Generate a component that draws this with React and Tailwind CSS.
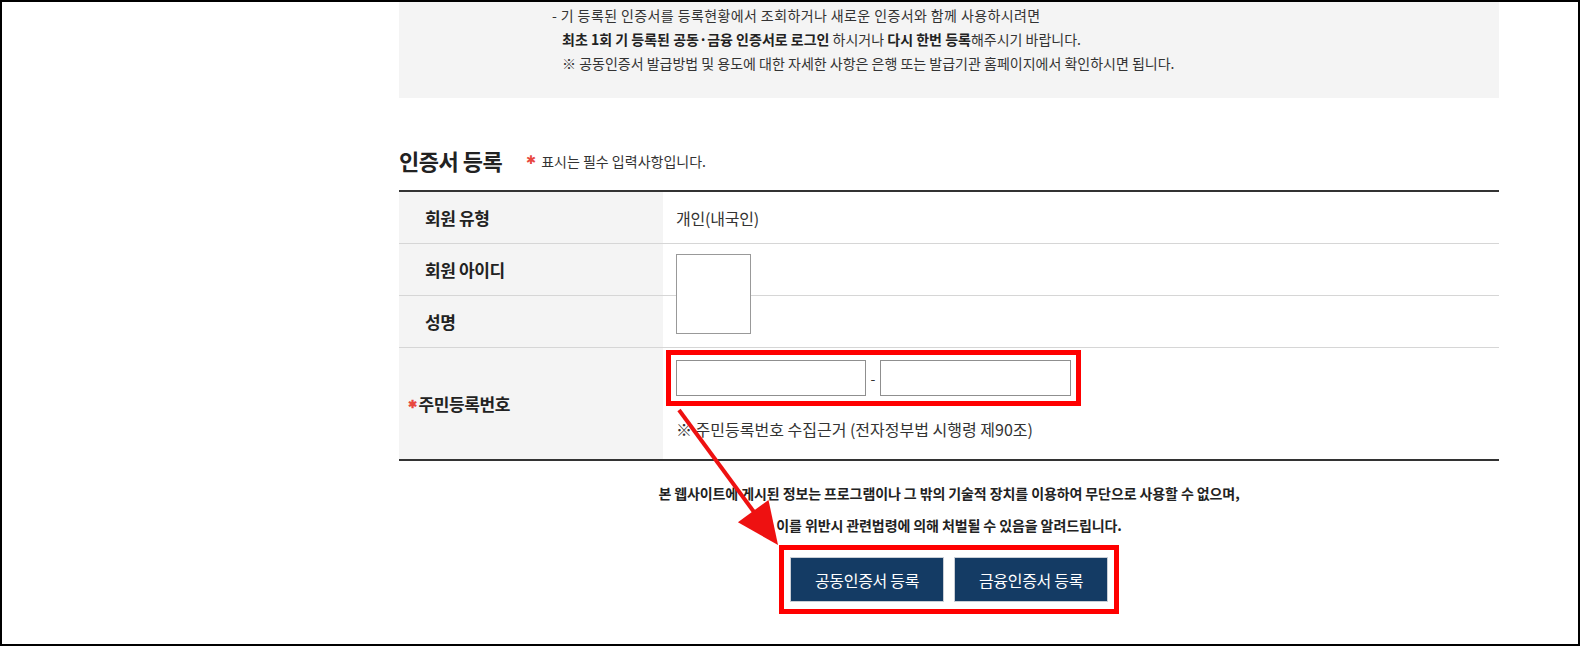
import React from "react";

const FONT = { fontFamily: '"Noto Sans CJK KR", "Noto Sans", sans-serif' };

function Star({ className = "" }) {
  return <span className={"text-[#e8473f] " + className}>✱</span>;
}

function Row({ label, children, star, h = "h-[52px]", last }) {
  return (
    <div className={"flex " + h + (last ? "" : " border-b border-[#d6d6d6]")}>
      <div className={"w-[264px] shrink-0 bg-[#f4f4f4] flex items-center text-[17px] font-bold text-[#222] tracking-[-0.4px] " + (star ? "pl-[9px]" : "pl-[26px]")}>
        {star && <Star className="text-[11px] mr-[2px]" />}
        {label}
      </div>
      <div className="flex-1 pl-[13px]">{children}</div>
    </div>
  );
}

export default function App() {
  return (
    <div style={FONT} className="relative w-[1580px] h-[646px] border-2 border-black bg-white overflow-hidden text-[#333]">
      <div className="ml-[397px] w-[1100px]">
        {/* notice box */}
        <div className="h-[96px] bg-[#f4f4f4] pt-[1px] text-[14px] leading-[24px] text-[#333]">
          <div className="pl-[153px] tracking-[0.4px]">- 기 등록된 인증서를 등록현황에서 조회하거나 새로운 인증서와 함께 사용하시려면</div>
          <div className="pl-[163px]">
            <b className="text-[#222]">최초 1회 기 등록된 공동·금융 인증서로 로그인</b> 하시거나 <b className="text-[#222]">다시 한번 등록</b>해주시기 바랍니다.
          </div>
          <div className="pl-[163px]">※ 공동인증서 발급방법 및 용도에 대한 자세한 사항은 은행 또는 발급기관 홈페이지에서 확인하시면 됩니다.</div>
        </div>

        {/* title */}
        <div className="mt-[47px] flex items-end h-[30px]">
          <h2 className="text-[22px] font-bold text-[#222] tracking-[-0.5px] leading-[30px]">인증서 등록</h2>
          <div className="ml-[24px] mb-[3px] flex items-center text-[14px] text-[#333]">
            <Star className="text-[12px] mr-[5px] -mt-[6px]" />
            표시는 필수 입력사항입니다.
          </div>
        </div>

        {/* table */}
        <div className="relative mt-[15px] border-t-2 border-b-2 border-[#333]">
          <Row label="회원 유형">
            <div className="h-full flex items-center text-[16px] tracking-[-0.2px] text-[#333]">개인(내국인)</div>
          </Row>
          <Row label="회원 아이디" />
          <Row label="성명" />
          <Row label="주민등록번호" star h="h-[111px]" last>
            <div className="pt-[2px] -ml-[10px]">
              <div className="inline-flex items-center border-[5px] border-[#ff0000] px-[5px] py-[5px]">
                <div className="w-[190px] h-[36px] border border-[#8f8f8f] bg-white" />
                <span className="w-[14px] text-center text-[14px] text-[#333]">-</span>
                <div className="w-[191px] h-[36px] border border-[#8f8f8f] bg-white" />
              </div>
              <div className="mt-[11px] ml-[10px] text-[16px] leading-[24px] text-[#333]">
                ※ 주민등록번호 수집근거 (전자정부법 시행령 제90조)
              </div>
            </div>
          </Row>
          {/* broken field box overlapping two rows */}
          <div className="absolute left-[277px] top-[62px] w-[75px] h-[80px] border border-[#999] bg-white" />
        </div>

        {/* legal notice */}
        <div className="mt-[16px] text-center text-[14px] font-bold leading-[32px] tracking-[-0.1px] text-[#222]">
          <p>본 웹사이트에 게시된 정보는 프로그램이나 그 밖의 기술적 장치를 이용하여 무단으로 사용할 수 없으며,</p>
          <p>이를 위반시 관련법령에 의해 처벌될 수 있음을 알려드립니다.</p>
        </div>

        <div className="mt-[4px] flex justify-center">
          <div className="flex gap-[10px] border-[5px] border-[#ff0000] px-[6px] py-[7px]">
            <button className="w-[154px] h-[45px] bg-[#143b64] border border-[#c9ced6] text-white text-[16px] tracking-[-0.3px]">공동인증서 등록</button>
            <button className="w-[154px] h-[45px] bg-[#143b64] border border-[#c9ced6] text-white text-[16px] tracking-[-0.3px]">금융인증서 등록</button>
          </div>
        </div>
      </div>

      {/* annotation arrow */}
      <svg className="absolute -left-[2px] -top-[2px] w-[1580px] h-[646px] pointer-events-none" viewBox="0 0 1580 646">
        <line x1="679" y1="410" x2="754" y2="512" stroke="#ee1111" strokeWidth="4" />
        <polygon points="778,545 737.9,522.3 768.5,499.9" fill="#ee1111" />
      </svg>
    </div>
  );
}
